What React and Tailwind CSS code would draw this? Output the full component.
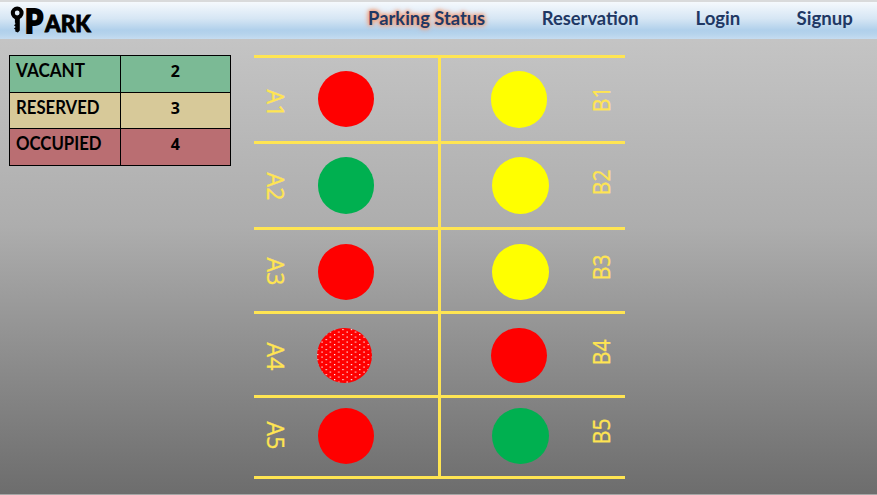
const navItems = [
  { label: "Parking Status", box: "ml-[368px] w-[118px]", scale: "scale-x-[0.965]", glow: true },
  { label: "Reservation", box: "ml-[56px] w-[97px]", scale: "scale-x-[0.965]" },
  { label: "Login", box: "ml-[56px] w-[46px]", scale: "scale-x-[0.98]" },
  { label: "Signup", box: "ml-[55px] w-[57px]", scale: "scale-x-[0.98]" },
];

const totals = [
  { label: "VACANT", count: 2, color: "bg-[#7bba95]", scale: "scale-x-[0.95]" },
  { label: "RESERVED", count: 3, color: "bg-[#d7c999]", scale: "scale-x-[0.93]" },
  { label: "OCCUPIED", count: 4, color: "bg-[#ba6e72]", scale: "scale-x-[0.93]" },
];

const RED = "bg-[#ff0000]";
const GREEN = "bg-[#00b050]";
const YELLOW = "bg-[#ffff00]";

const rows = [
  {
    height: "h-[86px]",
    a: { name: "A1", pad: "pt-[32px]", dot: "ml-[34px] mt-[13px] w-[56px] h-[56px]", color: RED },
    b: { name: "B1", pad: "pt-[28px]", dot: "ml-[50px] mt-[13px] w-[56px] h-[57px]", color: YELLOW },
  },
  {
    height: "h-[86px]",
    a: { name: "A2", pad: "pt-[29px]", dot: "ml-[34px] mt-[13px] w-[56px] h-[57px]", color: GREEN },
    b: { name: "B2", pad: "pt-[25px]", dot: "ml-[51px] mt-[13px] w-[57px] h-[57px]", color: YELLOW },
  },
  {
    height: "h-[84px]",
    a: { name: "A3", pad: "pt-[28px]", dot: "ml-[34px] mt-[14px] w-[56px] h-[56px]", color: RED },
    b: { name: "B3", pad: "pt-[24px]", dot: "ml-[51px] mt-[14px] w-[57px] h-[56px]", color: YELLOW },
  },
  {
    height: "h-[84px]",
    a: { name: "A4", pad: "pt-[29px]", dot: "ml-[33px] mt-[14px] w-[55px] h-[55px]", color: RED, speckled: true },
    b: { name: "B4", pad: "pt-[25px]", dot: "ml-[50px] mt-[14px] w-[56px] h-[55px]", color: RED },
  },
  {
    height: "h-[81px]",
    a: { name: "A5", pad: "pt-[24px]", dot: "ml-[34px] mt-[10px] w-[56px] h-[56px]", color: RED },
    b: { name: "B5", pad: "pt-[20px]", dot: "ml-[51px] mt-[10px] w-[57px] h-[56px]", color: GREEN },
  },
];

function Logo() {
  return (
    <div className="absolute left-[10px] top-0 flex h-[37px] font-['Lato',sans-serif] font-black text-black">
      <svg width="15" height="37" viewBox="0 2 15 37" aria-hidden="true">
        <circle cx="7.2" cy="13" r="4.4" fill="none" stroke="#000" strokeWidth="4" />
        <path d="M4.9 18h4.9v12.6l-1.9 1.8-2.6-1v-1.8l-1.4-1 1.4-1v-1.4l-1.4-1 1.4-1v-1.4h-.4z" fill="#000" />
      </svg>
      <span className="w-[20px] text-[32px] leading-[37px]">
        <span className="inline-block origin-left scale-x-[0.9] [-webkit-text-stroke:2px_#000]">P</span>
      </span>
      <span className="pt-[7px] text-[23px] leading-[29px]">
        <span className="inline-block origin-left scale-x-[0.97] [-webkit-text-stroke:0.9px_#000]">ARK</span>
      </span>
    </div>
  );
}

function Dot({ spot }) {
  return (
    <div className={`shrink-0 overflow-hidden rounded-full ${spot.dot} ${spot.color}`}>
      {spot.speckled && (
        <svg width="56" height="56" aria-hidden="true">
          <defs>
            <pattern id="specks" x="0.2" y="1" width="8.4" height="5" patternUnits="userSpaceOnUse">
              <rect x="0" y="0" width="1.2" height="1.2" fill="#fff" />
              <rect x="4.2" y="2.5" width="1.2" height="1.2" fill="#fff" />
            </pattern>
          </defs>
          <rect width="56" height="56" fill="url(#specks)" />
        </svg>
      )}
    </div>
  );
}

const labelText =
  "block h-[32px] w-[32px] text-center text-[24px] leading-[32px] text-[#ffe552] [writing-mode:vertical-rl] [-webkit-text-stroke:0.35px_#ffe552]";

export default function App() {
  return (
    <div className="flex h-[495px] w-[877px] flex-col overflow-hidden border-b border-[#a6a6a6] bg-linear-to-b from-[#c9c9c9] via-[#adadad] via-46% to-[#6d6d6d] font-['Open_Sans',sans-serif]">
      <header className="relative flex h-[39px] shrink-0 border-t-2 border-[#d9dadb] bg-[linear-gradient(to_bottom,#f5f9fd_0%,#d6e6f4_45%,#b0d0eb_76%,#b5d3ec_86%,#c5dcf0_100%)]">
        <Logo />
        <nav className="flex font-['Lato',sans-serif] text-[19px] leading-[31px] font-bold text-[#1f3864]">
          {navItems.map((item) => (
            <a
              key={item.label}
              className={`flex justify-center whitespace-nowrap ${item.box} ${
                item.glow
                  ? "[text-shadow:0_0_3px_#f0a585,0_0_4px_#f0a585,0_0_5px_#f0a585,0_0_6px_#f0a585]"
                  : ""
              }`}
            >
              <span className={`inline-block ${item.scale}`}>{item.label}</span>
            </a>
          ))}
        </nav>
      </header>

      <main className="flex items-start pt-[16px]">
        <table className="ml-[9px] w-[222px] table-fixed border-collapse text-black">
          <tbody>
            {totals.map((row) => (
              <tr key={row.label} className={`h-[36.5px] ${row.color}`}>
                <td className="border-[1.5px] border-black p-0 pl-[6px] align-top font-['Lato',sans-serif] text-[18px] leading-[28px] font-bold">
                  <span className={`inline-block origin-left ${row.scale}`}>{row.label}</span>
                </td>
                <td className="border-[1.5px] border-black p-0 text-center align-top text-[16px] leading-[30px] font-bold">
                  {row.count}
                </td>
              </tr>
            ))}
          </tbody>
        </table>

        <section className="ml-[23px] w-[371px]">
          {rows.map((row) => (
            <div key={row.a.name} className={`flex border-t-[3px] border-[#ffe552] ${row.height}`}>
              <div className="flex w-[187px] border-r-[3px] border-[#ffe552]">
                <div className={`ml-[6px] w-[32px] ${row.a.pad} -mt-[3px]`}>
                  <span className={`${labelText} scale-y-[0.96]`}>{row.a.name}</span>
                </div>
                <div className="-ml-[8px] flex">
                  <Dot spot={row.a} />
                </div>
              </div>
              <div className="flex w-[184px]">
                <div className="flex w-[144px]">
                  <Dot spot={row.b} />
                </div>
                <div className={`${row.b.pad} -mt-[3px]`}>
                  <span className={`${labelText} rotate-180 scale-y-[0.88]`}>{row.b.name}</span>
                </div>
              </div>
            </div>
          ))}
          <div className="h-[3px] bg-[#ffe552]" />
        </section>
      </main>
    </div>
  );
}
